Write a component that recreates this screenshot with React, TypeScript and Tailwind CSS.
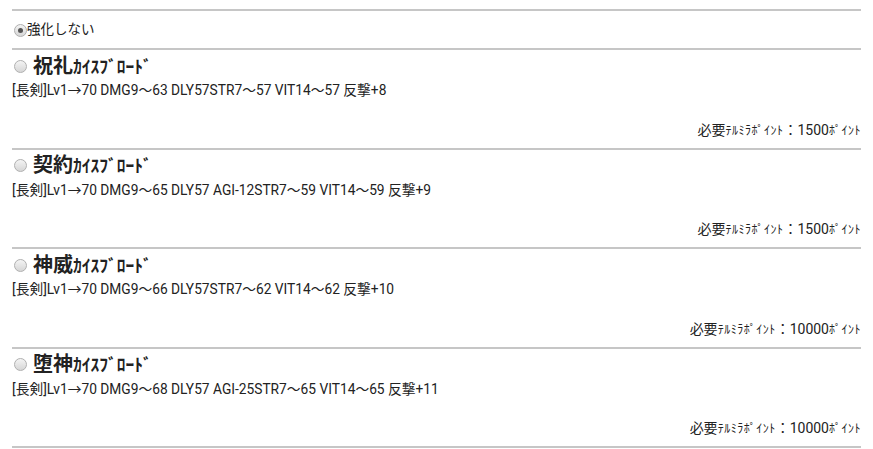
import { useState } from "react";

interface Item {
  id: string;
  name: string;
  desc: string;
  cost: string;
}

const items: Item[] = [
  { id: "a", name: "祝礼", desc: "[長剣]Lv1→70 DMG9〜63 DLY57STR7〜57 VIT14〜57 反撃+8", cost: "1500" },
  { id: "b", name: "契約", desc: "[長剣]Lv1→70 DMG9〜65 DLY57 AGI-12STR7〜59 VIT14〜59 反撃+9", cost: "1500" },
  { id: "c", name: "神威", desc: "[長剣]Lv1→70 DMG9〜66 DLY57STR7〜62 VIT14〜62 反撃+10", cost: "10000" },
  { id: "d", name: "堕神", desc: "[長剣]Lv1→70 DMG9〜68 DLY57 AGI-25STR7〜65 VIT14〜65 反撃+11", cost: "10000" },
];

function Radio({ checked, onClick }: { checked: boolean; onClick: () => void }) {
  return (
    <span
      onClick={onClick}
      className="inline-flex w-[13px] h-[13px] rounded-full border border-[#b0b0b0] bg-gradient-to-b from-[#f4f4f4] to-[#d6d6d6] items-center justify-center shrink-0 cursor-pointer"
    >
      {checked && <span className="w-[5px] h-[5px] rounded-full bg-[#555]" />}
    </span>
  );
}

export default function App() {
  const [sel, setSel] = useState("none");

  return (
    <div
      className="bg-white text-[#222] px-3 pt-[9px] min-h-screen"
      style={{ fontFamily: 'Roboto, "Noto Sans CJK JP", sans-serif' }}
    >
      <div className="border-t-2 border-[#c6c6c6] h-[39px] flex items-center pl-[2px]">
        <div className="flex items-center">
          <span className="-mt-[3px]">
            <Radio checked={sel === "none"} onClick={() => setSel("none")} />
          </span>
          <span className="text-[13.5px] leading-none mt-[1px]">強化しない</span>
        </div>
      </div>

      {items.map((it) => (
        <div key={it.id} className="border-t-2 border-[#c6c6c6] h-[99.5px] flex flex-col">
          <div className="flex items-center gap-[6px] pl-[2px] mt-[5px] h-[22px]">
            <Radio checked={sel === it.id} onClick={() => setSel(it.id)} />
            <span className="text-[20px] font-bold leading-none">
              {it.name}
              <span className="text-[17.5px]">ｶｲｽﾌﾞﾛｰﾄﾞ</span>
            </span>
          </div>
          <div className="text-[13.75px] leading-none mt-[7px]">{it.desc}</div>
          <div className="flex-1" />
          <div className="text-right text-[14px] leading-none mb-[11px]">
            必要<span className="text-[12px] tracking-[0.5px]">ﾃﾙﾐﾗﾎﾟｲﾝﾄ</span>：{it.cost}
            <span className="text-[12px] tracking-[0.5px]">ﾎﾟｲﾝﾄ</span>
          </div>
        </div>
      ))}
      <div className="border-t-2 border-[#c6c6c6]" />
    </div>
  );
}
